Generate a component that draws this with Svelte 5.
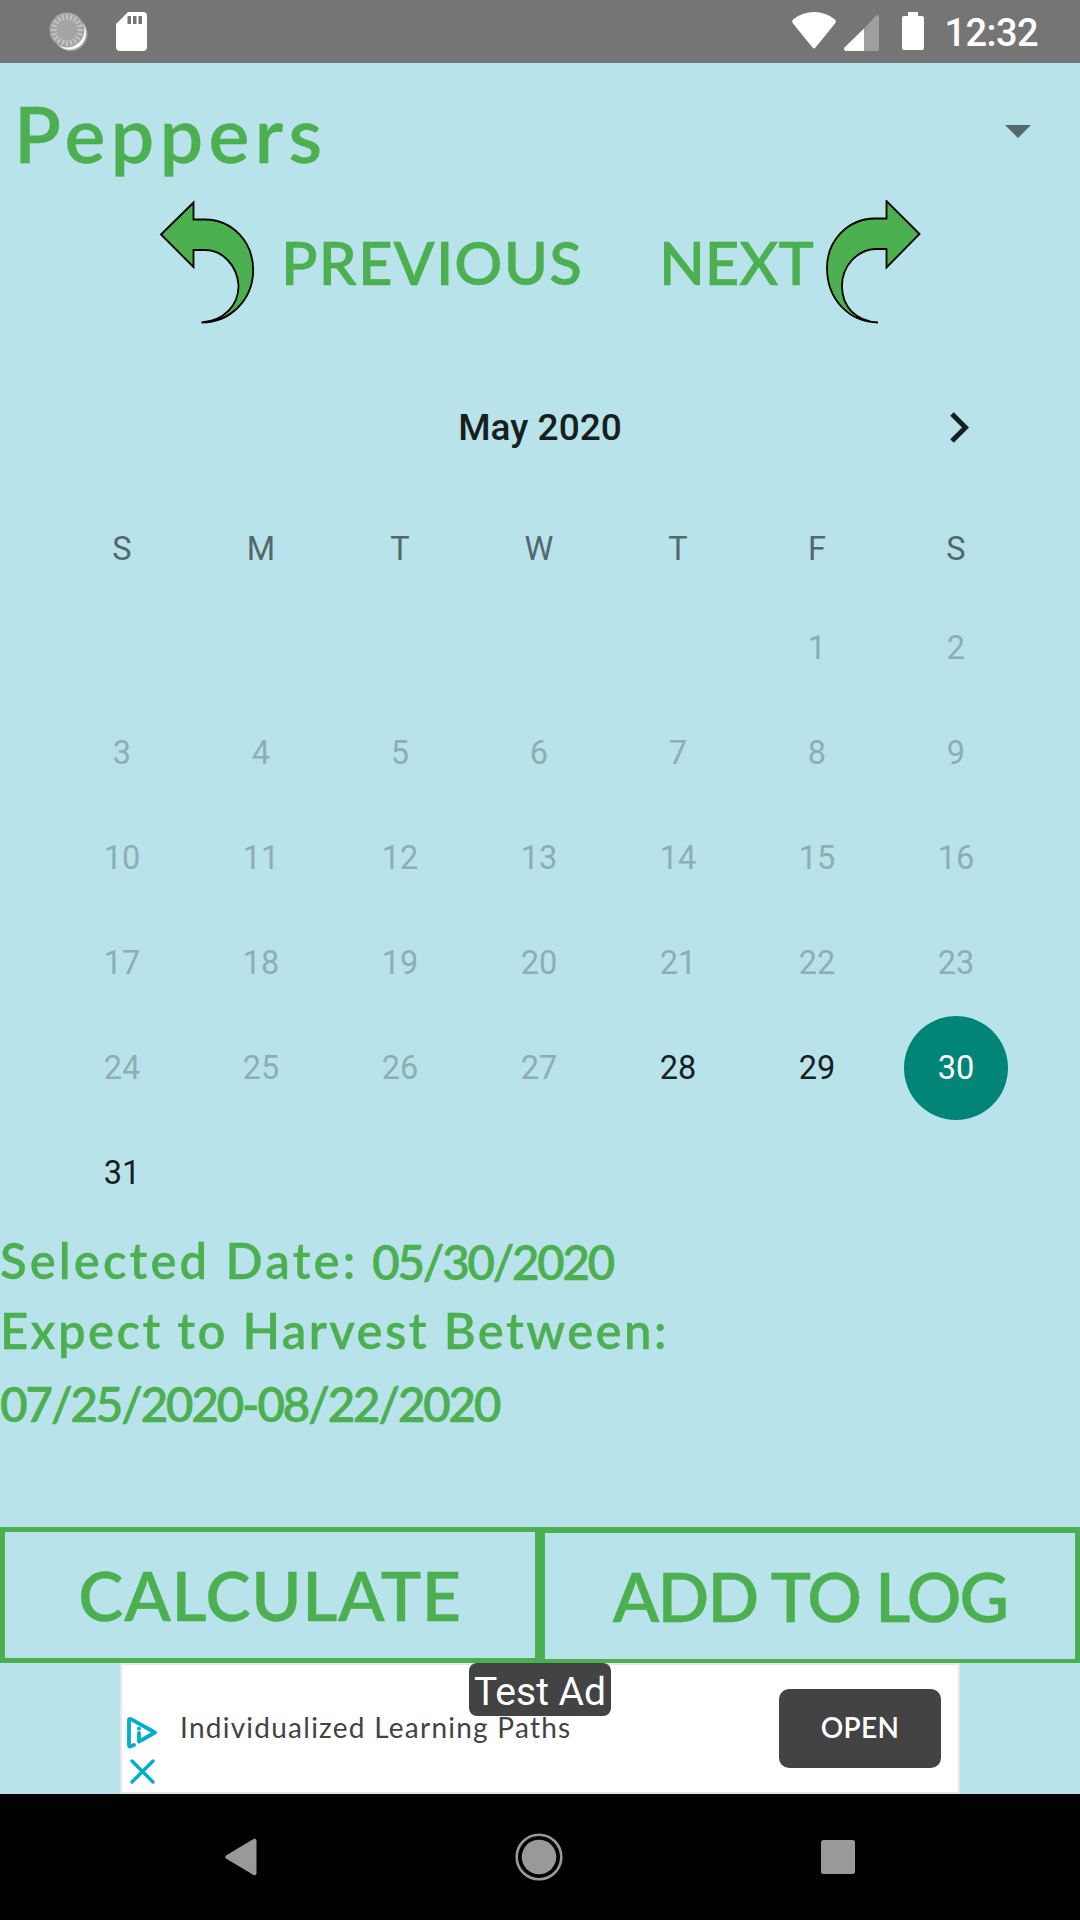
<script>
  const weekdays = ['S', 'M', 'T', 'W', 'T', 'F', 'S'];
  const leading = 5;
  const selected = 30;
  const firstEnabled = 28;
  const cells = [
    ...Array(leading).fill(null),
    ...Array.from({ length: 31 }, (_, i) => i + 1)
  ];
  const ticks = Array.from({ length: 20 }, (_, i) => i * 18);
</script>

<div class="screen">
  <header class="status">
    <div class="group">
      <svg class="sync" width="40" height="40" viewBox="0 0 40 40">
        <circle cx="21.5" cy="22" r="17" fill="#a8a8a8" />
        <circle cx="20.5" cy="21" r="16.5" fill="#fff" />
        <circle cx="18" cy="18" r="17.5" fill="#a4a4a4" />
        {#each ticks as angle}
          <path d="M18 2v5.5" stroke="#c6c6c6" stroke-width="1.8" transform="rotate({angle} 18 18)" />
        {/each}
      </svg>
      <svg width="31" height="39" viewBox="0 0 31 39">
        <path fill="#fff" fill-rule="evenodd" d="M12 0h15q4 0 4 4v31q0 4-4 4H4q-4 0-4-4V12zM11.500 4v8h3.500V4zM17 4v8h3.500V4zM22.500 4v8h3.500V4z" />
      </svg>
    </div>
    <div class="group">
      <svg width="44" height="37" viewBox="0 0 44 37">
        <path fill="#fff" d="M1 7.500Q10 0 22 0t21 7.500q1.500 2 0 4L23.500 35.500q-1.500 2-3 0L1 11.500q-1.500-2 0-4z" />
      </svg>
      <svg class="signal" width="35" height="36" viewBox="0 0 35 36">
        <path fill="#9f9f9f" d="M20 13.500 32 .8q3-2 3 1.500V34q0 2-2 2H20z" />
        <path fill="#fff" d="M20 13.500V36H2q-3-1-1.500-3.500z" />
      </svg>
      <svg class="battery" width="22" height="38" viewBox="0 0 22 38">
        <path fill="#fff" d="M6 0h10v4h4q2 0 2 2v30q0 2-2 2H2q-2 0-2-2V6q0-2 2-2h4z" />
      </svg>
      <span class="clock">12:32</span>
    </div>
  </header>

  <div class="spinner">
    <span class="hand crop">Peppers</span>
    <svg width="26" height="13" viewBox="0 0 26 13"><path fill="#53686b" d="M0 0h26L13 13z" /></svg>
  </div>

  <nav class="pager">
    <svg class="arrow" width="96" height="124" viewBox="159 200 96 124">
      <path d="M161 234.500 193.500 202.500V219.500H205C233 220 253 242 253.200 270C253 300 230 322.500 201.500 322.500C224 321 239 305 238.500 285C237 265 222 250 205 250H193.500V267z" />
    </svg>
    <span class="hand prev">PREVIOUS</span>
    <span class="hand next">NEXT</span>
    <svg class="arrow" width="96" height="124" viewBox="825 200 96 124">
      <path d="M919.500 234 886.500 201V218.500H875C846 219 827 242 827 268C827 300 850 322.500 878 322.500C856 321 842 307 842 286C842 265 858 250 875 249H886.500V267.500z" />
    </svg>
  </nav>

  <section class="calendar">
    <div class="month">
      <h2>May 2020</h2>
      <svg width="19" height="31" viewBox="0 0 19 31">
        <path d="M2 2 15.500 15.500 2 29" fill="none" stroke="#171f21" stroke-width="5" />
      </svg>
    </div>
    <div class="grid weekdays">
      {#each weekdays as d}<span>{d}</span>{/each}
    </div>
    <div class="grid days">
      {#each cells as day}
        <span class:enabled={day >= firstEnabled} class:selected={day === selected}>{day ?? ''}</span>
      {/each}
    </div>
  </section>

  <section class="result">
    <p class="hand"><span class="label">Selected Date:</span><span class="date">05/30/2020</span></p>
    <p class="hand expect">Expect to Harvest Between:</p>
    <p class="hand range">07/25/2020-08/22/2020</p>
  </section>

  <div class="actions">
    <button class="hand calc">CALCULATE</button>
    <button class="hand log">ADD TO LOG</button>
  </div>

  <div class="banner">
    <div class="ad">
      <div class="choices">
        <svg width="31" height="32" viewBox="0 0 31 32" fill="none" stroke="#00aecd" stroke-width="3.800" stroke-linecap="round" stroke-linejoin="round">
          <path d="M7 28 3 29.500Q2 29.500 2 28V3Q2 1.500 4 2.200L28 15.500 12 24.500V16" />
          <circle cx="12" cy="11.500" r="2" fill="#00aecd" stroke="none" />
        </svg>
        <svg width="25" height="25" viewBox="0 0 25 25" fill="none" stroke="#00aecd" stroke-width="3.400" stroke-linecap="round">
          <path d="M2 2 23 23M23 2 2 23" />
        </svg>
      </div>
      <span class="title">Individualized Learning Paths</span>
      <button class="open">OPEN</button>
      <span class="tag">Test Ad</span>
    </div>
  </div>

  <footer class="navbar">
    <svg width="32" height="38" viewBox="0 0 32 38"><path fill="#999" d="M28.500 1Q31.500 0 31.500 3v32q0 3-3 2L1 20.500q-1.500-1.500 0-3z" /></svg>
    <svg width="48" height="48" viewBox="0 0 48 48">
      <circle cx="24" cy="24" r="22.300" fill="none" stroke="#999" stroke-width="2.600" />
      <circle cx="24" cy="24" r="17.300" fill="#999" />
    </svg>
    <svg width="34" height="34" viewBox="0 0 34 34"><rect width="34" height="34" rx="2.500" fill="#999" /></svg>
  </footer>
</div>

<style>
  :global(body) { margin: 0; }
  .screen {
    width: 1080px;
    height: 1920px;
    display: flex;
    flex-direction: column;
    background: #b8e3eb;
    font-family: Roboto, sans-serif;
    overflow: hidden;
  }
  svg { display: block; flex: none; }
  .hand {
    font-family: Lato, sans-serif;
    font-weight: 600;
    color: #4caf50;
    white-space: pre;
    line-height: 1;
    -webkit-text-stroke: 0.3px #4caf50;
  }
  .status {
    height: 63px;
    flex: none;
    box-sizing: border-box;
    display: flex;
    justify-content: space-between;
    padding: 12px 42px 0 49px;
    background: #757575;
  }
  .group { display: flex; align-items: flex-start; }
  .sync { margin-right: 27px; }
  .signal { margin: 3px 23px 0 8px; }
  .battery { margin-right: 21px; }
  .clock { color: #fff; font-size: 38px; font-weight: 500; line-height: 43px; letter-spacing: -0.600px; }
  .spinner {
    height: 137px;
    flex: none;
    box-sizing: border-box;
    display: flex;
    justify-content: space-between;
    align-items: center;
    padding: 0 49px 0 14px;
  }
  .crop { font-size: 77px; letter-spacing: 5.400px; padding-top: 3px; }
  .pager { height: 124px; flex: none; display: flex; padding-left: 159px; }
  .pager .hand { box-sizing: border-box; font-size: 60px; line-height: 125px; }
  .prev { width: 404px; padding-left: 26px; letter-spacing: 1.100px; }
  .next { width: 166px; letter-spacing: -0.300px; }
  .arrow path { fill: #4caf50; stroke: #000; stroke-width: 1.800; }
  .calendar { height: 901px; flex: none; }
  .month {
    height: 206px;
    box-sizing: border-box;
    display: grid;
    grid-template-columns: 1fr auto 1fr;
    align-items: center;
    padding: 0 111px;
  }
  .month h2 { grid-column: 2; margin: 0; font-size: 37px; font-weight: 500; color: #171f21; }
  .month svg { justify-self: end; }
  .grid { display: grid; grid-template-columns: repeat(7, 139px); padding-left: 52.500px; }
  .grid span { display: flex; align-items: center; justify-content: center; font-size: 32.500px; }
  .weekdays { height: 35px; padding-bottom: 30px; color: #53686b; }
  .days { grid-auto-rows: 105px; color: #8daeb4; }
  .enabled { color: #171f21; }
  .grid .selected {
    width: 104px;
    height: 104px;
    place-self: center;
    border-radius: 50%;
    background: #008577;
    color: #fff;
  }
  .result { height: 302px; flex: none; }
  .result p { margin: 0; font-size: 49px; height: 70px; line-height: 70px; display: flex; }
  .label { width: 372px; letter-spacing: 3.100px; }
  .date { letter-spacing: -2.600px; font-size: 48px; line-height: 74px; }
  .result .expect { letter-spacing: 2.400px; line-height: 71px; }
  .result .range { font-size: 48px; letter-spacing: -2.500px; line-height: 77px; }
  .actions { height: 136px; flex: none; display: grid; grid-template-columns: 1fr 1fr; }
  .actions button {
    border: 5px solid #4caf50;
    background: none;
    padding: 0 0 1px;
    font-size: 68px;
    letter-spacing: 0.700px;
  }
  .actions .log { border-width: 6px 5px 4px; letter-spacing: -1.800px; }
  .banner { height: 131px; flex: none; display: flex; justify-content: center; }
  .ad {
    position: relative;
    width: 840px;
    box-sizing: border-box;
    border: 2px solid #e4e8ea;
    background: #fff;
    display: flex;
    align-items: center;
  }
  .choices { width: 58px; box-sizing: border-box; padding: 52px 0 0 5px; display: grid; gap: 10px; align-self: flex-start; }
  .choices svg + svg { margin-left: 3px; }
  .title { font: 28px Lato, sans-serif; color: #434343; flex: 1; white-space: nowrap; letter-spacing: 1.250px; padding-bottom: 4px; }
  .open {
    width: 162px;
    height: 79px;
    margin-right: 17px;
    border: 0;
    border-radius: 10px;
    padding: 0 0 4px;
    background: #434343;
    color: #fff;
    font: 600 28px Lato, sans-serif;
    letter-spacing: 0.300px;
  }
  .tag {
    position: absolute;
    left: 347px;
    top: -2px;
    width: 142px;
    height: 53px;
    border-radius: 8px;
    background: #434343;
    color: #fff;
    font-size: 39px;
    line-height: 58px;
    text-align: center;
  }
  .navbar {
    height: 126px;
    flex: none;
    box-sizing: border-box;
    display: flex;
    align-items: center;
    justify-content: space-between;
    padding: 0 225px;
    background: #000;
  }
</style>
